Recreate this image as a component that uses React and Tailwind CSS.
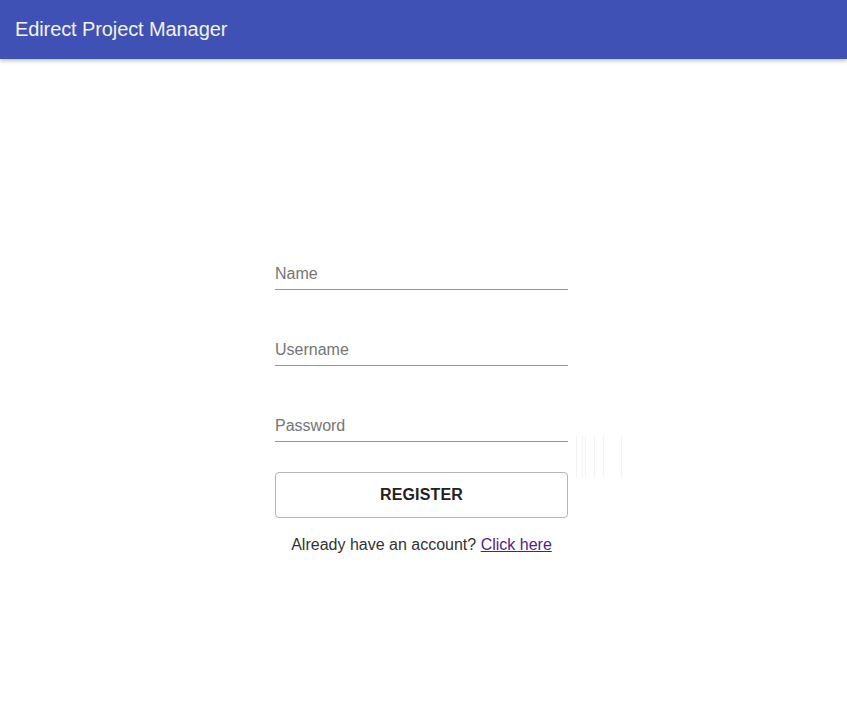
import React, { useState } from 'react';

const Field = ({ label, type, value, onChange }) => (
    <label className="block relative h-[38px]">
        {value.length === 0 && (
            <span className="absolute left-0 top-[10px] text-[16px] text-[#757575] pointer-events-none">{label}</span>
        )}
        <input
            type={type}
            value={value}
            onChange={(ev) => onChange(ev.target.value)}
            className="w-full h-[38px] pt-[6px] bg-transparent text-[16px] text-[#222] outline-none border-b border-[#949494]"
        />
    </label>
);

const App = () => {
    const [name, setName] = useState('');
    const [username, setUsername] = useState('');
    const [password, setPassword] = useState('');

    return (
        <div className="min-h-[722px] bg-white font-['Liberation_Sans',Arial,sans-serif]">
            <header className="h-[59px] bg-[#3f51b5] flex items-center px-[15px] shadow-[0_2px_4px_rgba(0,0,0,0.25)]">
                <span className="text-[20px] text-[#f3f3f8] mt-[-2px] tracking-[-0.1px]">Edirect Project Manager</span>
            </header>
            <div className="flex justify-center pt-[193px] pr-[4px]">
                <div className="w-[293px] relative">
                    <Field label="Name" type="text" value={name} onChange={setName} />
                    <div className="h-[38px]" />
                    <Field label="Username" type="text" value={username} onChange={setUsername} />
                    <div className="h-[38px]" />
                    <Field label="Password" type="password" value={password} onChange={setPassword} />
                    <div className="absolute left-[301px] top-[184px] flex h-[41px]">
                        <div className="w-px bg-[#f3f3f3]" />
                        <div className="w-px bg-[#f3f3f3] ml-[5px]" />
                        <div className="w-px bg-[#f3f3f3] ml-[2px]" />
                        <div className="w-px bg-[#f3f3f3] ml-[8px]" />
                        <div className="w-px bg-[#f3f3f3] ml-[8px]" />
                        <div className="w-px bg-[#f3f3f3] ml-[17px]" />
                    </div>
                    <button className="mt-[30px] w-full h-[46px] rounded-[4px] border border-[#b5b5b5] bg-white text-[16px] font-bold text-[#222] tracking-[0.15px]">
                        REGISTER
                    </button>
                    <p className="mt-[15px] text-center text-[16px] text-[#333]">
                        Already have an account? <a href="#" className="text-[#551a8b] underline">Click here</a>
                    </p>
                </div>
            </div>
        </div>
    );
};

export default App;
